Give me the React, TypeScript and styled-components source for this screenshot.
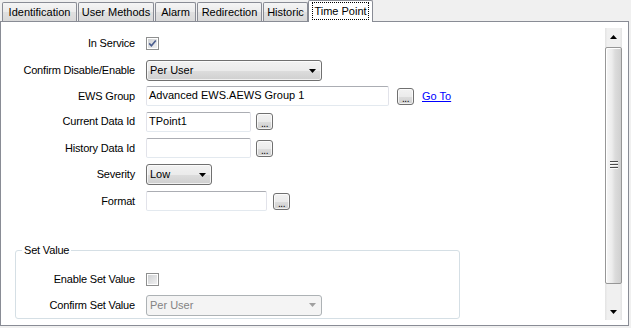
import React from 'react';
import styled, { createGlobalStyle, css } from 'styled-components';

const GlobalStyle = createGlobalStyle`
  html, body { margin: 0; padding: 0; background: #f0f0f0; }
  body {
    font-family: "Liberation Sans", Arial, sans-serif;
    font-size: 11px;
    color: #000;
  }
  #root { width: 631px; height: 328px; overflow: hidden; }
`;

const Window = styled.div`
  width: 631px;
  height: 328px;
  display: flex;
  flex-direction: column;
  background: #f0f0f0;
`;

const TabStrip = styled.div`
  display: flex;
  align-items: flex-end;
  gap: 1px;
  height: 21px;
  padding-left: 2px;
  position: relative;
  z-index: 1;
`;

const Tab = styled.div<{ $w: number; $active?: boolean }>`
  box-sizing: border-box;
  width: ${p => p.$w}px;
  height: 19px;
  border: 1px solid #898c95;
  border-bottom: none;
  border-radius: 2px 2px 0 0;
  background: linear-gradient(#f5f5f5, #ebebeb 50%, #e0e0e0 51%, #d9d9d9);
  text-align: center;
  padding-top: 1px;
  line-height: 17px;
  white-space: nowrap;
  ${p =>
    p.$active &&
    css`
      height: 22px;
      margin-bottom: -1px;
      margin-left: -1px;
      background: #fff;
      line-height: 16px;
    `}
`;

const FocusLabel = styled.span`
  display: inline-block;
  border: 1px dotted #000;
  padding: 0 1px;
  line-height: 16px;
`;

const Panel = styled.div`
  box-sizing: border-box;
  width: 629px;
  height: 305px;
  border: 1px solid #898c95;
  background: #fff;
  display: flex;
  padding: 6px 6px 5px 0;
  overflow: hidden;
`;

const Content = styled.div`
  flex: 1;
  display: flex;
  flex-direction: column;
  padding-top: 3px;
  overflow: hidden;
`;

const FormGrid = styled.div<{ $labelWidth: number; $rows: string }>`
  display: grid;
  grid-template-columns: ${p => p.$labelWidth}px auto;
  grid-template-rows: ${p => p.$rows};
  column-gap: 11px;
  align-items: center;
`;

const Label = styled.div`
  text-align: right;
  white-space: nowrap;
  line-height: 13px;
  letter-spacing: -0.18px;
`;

const Controls = styled.div<{ $gap?: number }>`
  display: flex;
  align-items: center;
  gap: ${p => p.$gap ?? 6}px;
`;

const TextBox = styled.div<{ $w: number; $h?: number }>`
  box-sizing: border-box;
  width: ${p => p.$w}px;
  height: ${p => p.$h ?? 20}px;
  border: 1px solid #e2e3ea;
  border-top-color: #abadb3;
  border-bottom-color: #e3e9ef;
  border-radius: 2px;
  background: #fff;
  padding: 0 2px;
  line-height: 17px;
  white-space: nowrap;
  overflow: hidden;
`;

const Combo = styled.div<{ $w: number; $disabled?: boolean }>`
  box-sizing: border-box;
  width: ${p => p.$w}px;
  height: 21px;
  border: 1px solid #707070;
  border-radius: 3px;
  background: linear-gradient(#f2f2f2, #ebebeb 50%, #dddddd 51%, #cfcfcf);
  box-shadow: inset 0 0 0 1px rgba(255, 255, 255, 0.7);
  display: flex;
  align-items: center;
  justify-content: space-between;
  padding: 0 5px 0 3px;
  line-height: 19px;
  ${p =>
    p.$disabled &&
    css`
      border-color: #adb2b5;
      background: #f4f4f4;
      box-shadow: none;
      color: #838383;
    `}
`;

const DotsButton = styled.div`
  box-sizing: border-box;
  width: 17px;
  height: 17px;
  border: 1px solid #707070;
  border-radius: 3px;
  background: linear-gradient(#f2f2f2, #ebebeb 50%, #dddddd 51%, #cfcfcf);
  box-shadow: inset 0 0 0 1px rgba(255, 255, 255, 0.7);
  text-align: center;
  font-size: 10px;
  line-height: 20px;
  letter-spacing: -0.5px;
  overflow: hidden;
`;

const CheckBox = styled.div`
  box-sizing: border-box;
  width: 13px;
  height: 13px;
  border: 1px solid #8e8f8f;
  background: #fff;
  padding: 1px;
  display: flex;
`;

const CheckInner = styled.div`
  flex: 1;
  background: linear-gradient(135deg, #cfd1d3, #f0f0f1);
  display: flex;
  align-items: center;
  justify-content: center;
`;

const LinkText = styled.span`
  color: #0000ff;
  text-decoration: underline;
  line-height: 13px;
`;

const GroupBox = styled.fieldset`
  box-sizing: border-box;
  margin: 31px 0 0 14px;
  width: 445px;
  min-width: 0;
  border: 1px solid #d5dfe5;
  border-radius: 3px;
  padding: 9px 0 0 6px;
`;

const GroupLegend = styled.legend`
  padding: 0 2px;
  line-height: 13px;
  letter-spacing: -0.18px;
`;

const ScrollBar = styled.div`
  flex: 0 0 17px;
  display: flex;
  flex-direction: column;
  background: linear-gradient(to right, #e3e3e3, #f0f0f0 15%, #f0f0f0 85%, #e3e3e3);
`;

const ScrollArrow = styled.div`
  height: 17px;
  flex: 0 0 17px;
  display: flex;
  align-items: center;
  justify-content: center;
`;

const ScrollTrack = styled.div`
  flex: 1;
  display: flex;
  flex-direction: column;
`;

const Thumb = styled.div`
  box-sizing: border-box;
  margin-top: 2px;
  height: 237px;
  border: 1px solid #979797;
  border-radius: 2px;
  background: linear-gradient(to right, #f7f7f7, #ececec 40%, #dcdcdc 60%, #cfcfcf);
  box-shadow: inset 1px 1px 0 #fff;
  display: flex;
  align-items: center;
  justify-content: center;
`;

const Arrow = ({ up }: { up?: boolean }) => (
  <svg width="7" height="4" viewBox="0 0 7 4">
    <polygon points={up ? '3.5,0 7,4 0,4' : '0,0 7,0 3.5,4'} fill="#000" />
  </svg>
);

const GripIcon = () => (
  <svg width="8" height="9" viewBox="0 0 8 9">
    {[0, 3, 6].map(y => (
      <g key={y}>
        <rect x="0" y={y} width="8" height="1" fill="#4a4a4a" />
        <rect x="0" y={y + 1} width="8" height="1" fill="#fafafa" />
      </g>
    ))}
  </svg>
);

const CheckMark = () => (
  <svg width="9" height="9" viewBox="0 0 9 9">
    <path d="M1.2 4.4 L3.4 6.8 L7.8 1.4" fill="none" stroke="#4a5d8e" strokeWidth="1.6" />
  </svg>
);

const Check = ({ checked }: { checked?: boolean }) => (
  <CheckBox>
    <CheckInner>{checked && <CheckMark />}</CheckInner>
  </CheckBox>
);

const Select = ({ w, value, disabled }: { w: number; value: string; disabled?: boolean }) => (
  <Combo $w={w} $disabled={disabled}>
    <span>{value}</span>
    <svg width="7" height="4" viewBox="0 0 7 4">
      <polygon points="0,0 7,0 3.5,4" fill={disabled ? '#a0a0a0' : '#000'} />
    </svg>
  </Combo>
);

const tabs = [
  { label: 'Identification', w: 75 },
  { label: 'User Methods', w: 76 },
  { label: 'Alarm', w: 41 },
  { label: 'Redirection', w: 65 },
  { label: 'Historic', w: 45 },
];

export default function App() {
  return (
    <>
      <GlobalStyle />
      <Window>
        <TabStrip>
          {tabs.map(t => (
            <Tab key={t.label} $w={t.w}>
              {t.label}
            </Tab>
          ))}
          <Tab $w={65} $active>
            <FocusLabel>Time Point</FocusLabel>
          </Tab>
        </TabStrip>
        <Panel>
          <Content>
            <FormGrid $labelWidth={134} $rows="25px 29px 22px 29px 24px 29px 24px">
              <Label>In Service</Label>
              <Controls>
                <Check checked />
              </Controls>

              <Label>Confirm Disable/Enable</Label>
              <Controls>
                <Select w={176} value="Per User" />
              </Controls>

              <Label>EWS Group</Label>
              <Controls $gap={8}>
                <TextBox $w={243}>Advanced EWS.AEWS Group 1</TextBox>
                <DotsButton>...</DotsButton>
                <LinkText>Go To</LinkText>
              </Controls>

              <Label>Current Data Id</Label>
              <Controls $gap={5}>
                <TextBox $w={105}>TPoint1</TextBox>
                <DotsButton>...</DotsButton>
              </Controls>

              <Label>History Data Id</Label>
              <Controls $gap={5}>
                <TextBox $w={105} />
                <DotsButton>...</DotsButton>
              </Controls>

              <Label>Severity</Label>
              <Controls>
                <Select w={66} value="Low" />
              </Controls>

              <Label>Format</Label>
              <Controls $gap={6}>
                <TextBox $w={121} />
                <DotsButton>...</DotsButton>
              </Controls>
            </FormGrid>

            <GroupBox>
              <GroupLegend>Set Value</GroupLegend>
              <FormGrid $labelWidth={113} $rows="26px 26px">
                <Label>Enable Set Value</Label>
                <Controls>
                  <Check />
                </Controls>

                <Label>Confirm Set Value</Label>
                <Controls>
                  <Select w={176} value="Per User" disabled />
                </Controls>
              </FormGrid>
            </GroupBox>
          </Content>
          <ScrollBar>
            <ScrollArrow>
              <Arrow up />
            </ScrollArrow>
            <ScrollTrack>
              <Thumb>
                <GripIcon />
              </Thumb>
            </ScrollTrack>
            <ScrollArrow>
              <Arrow />
            </ScrollArrow>
          </ScrollBar>
        </Panel>
      </Window>
    </>
  );
}
